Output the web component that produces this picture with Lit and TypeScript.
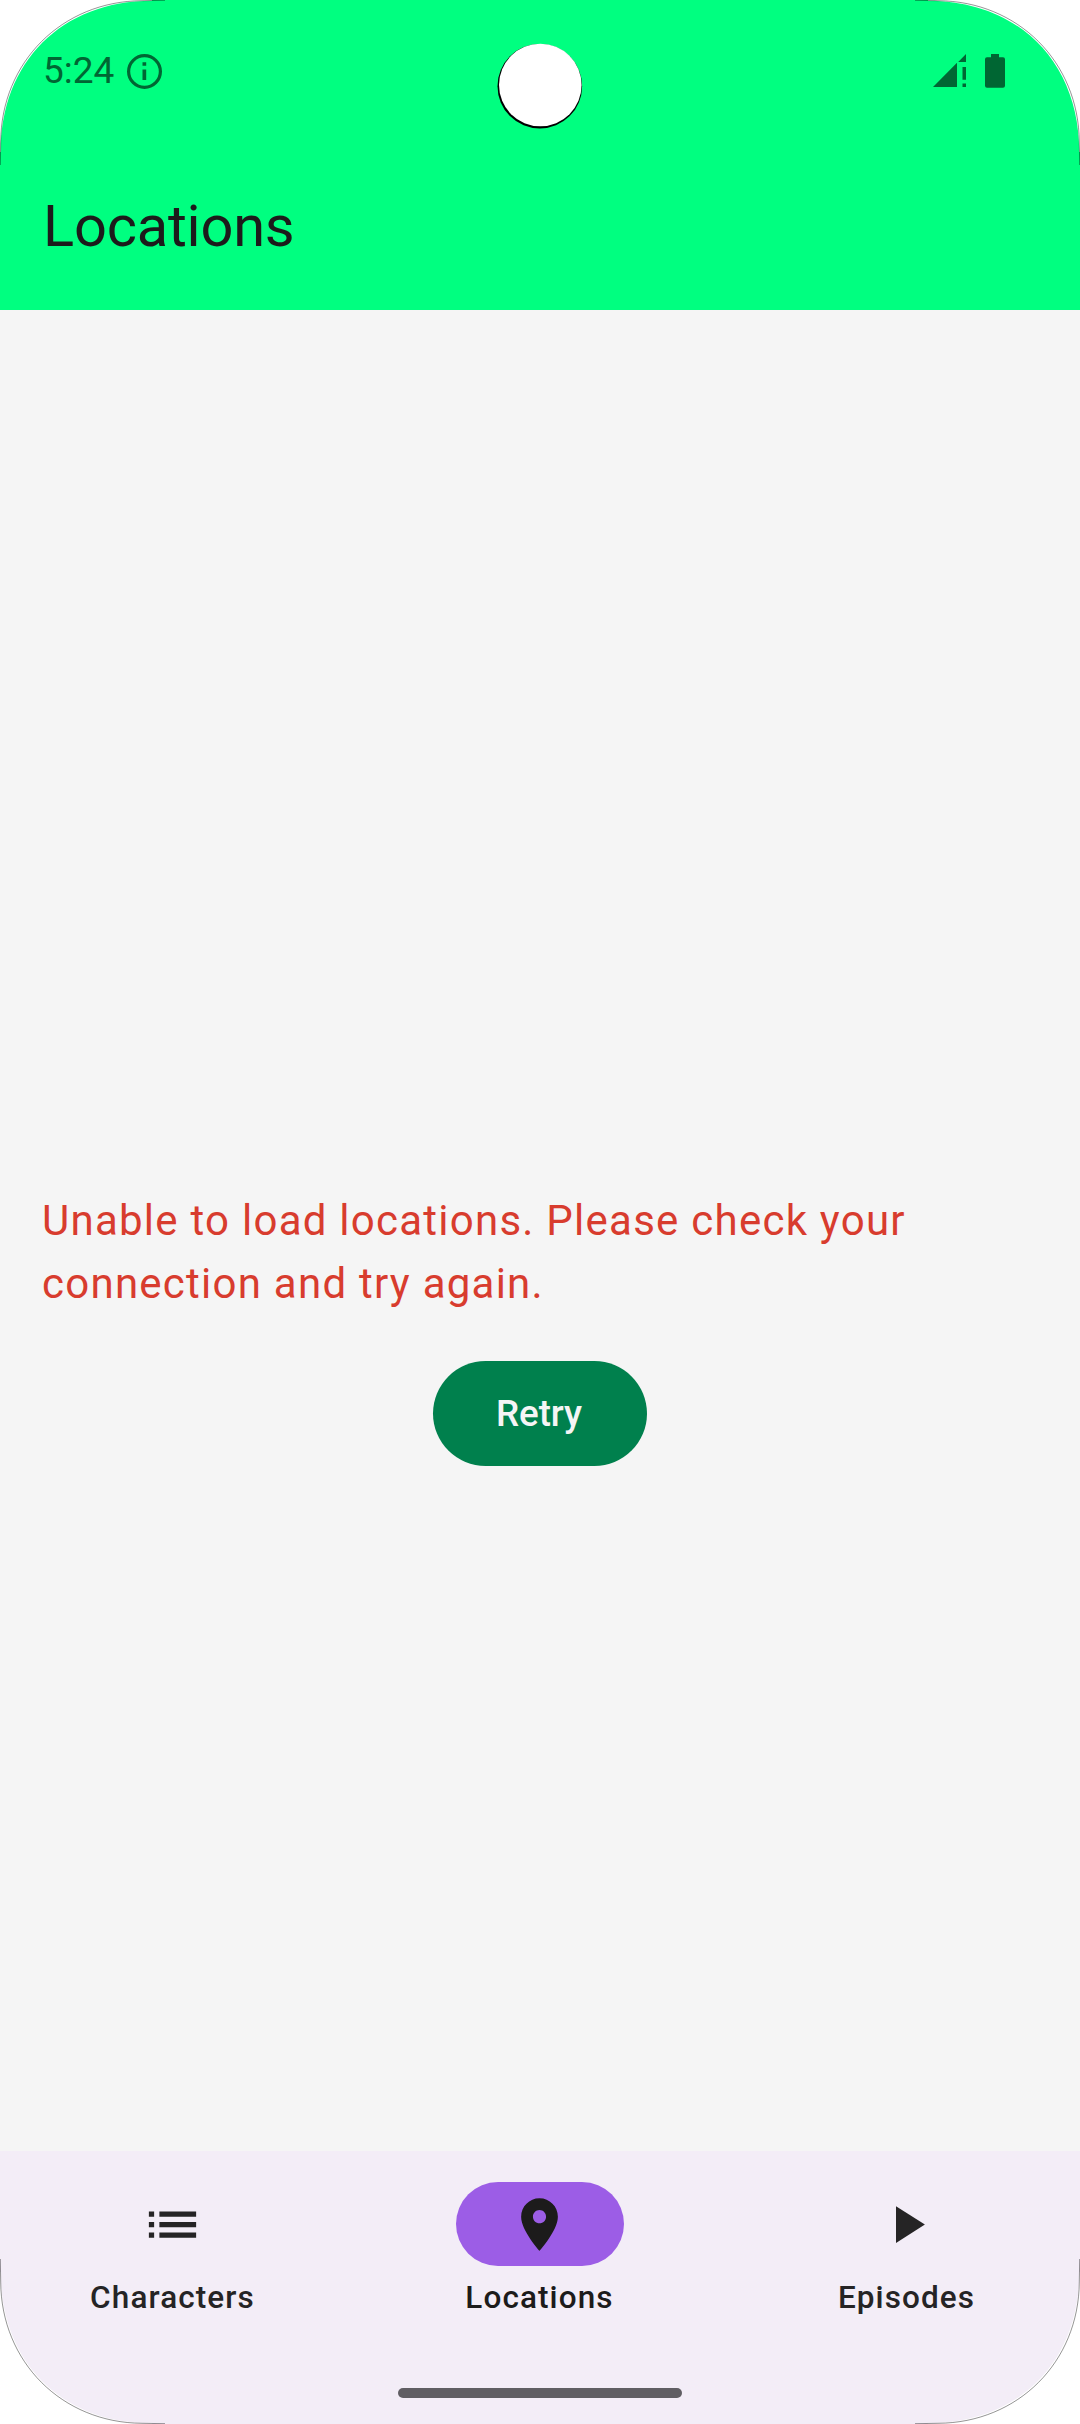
import { LitElement, html, css, svg } from "lit";
import { customElement } from "lit/decorators.js";

const icons = {
  list: svg`<path d="M3 13h2v-2H3v2zm0 4h2v-2H3v2zm0-8h2V7H3v2zm4 4h14v-2H7v2zm0 4h14v-2H7v2zM7 7v2h14V7H7z"/>`,
  place: svg`<path d="M12 2C8.130 2 5 5.130 5 9c0 5.250 7 13 7 13s7-7.750 7-13c0-3.870-3.130-7-7-7zm0 9.500c-1.380 0-2.500-1.120-2.500-2.500s1.120-2.500 2.500-2.500 2.500 1.120 2.500 2.500-1.120 2.500-2.500 2.500z"/>`,
  play: svg`<path d="M8 5v14l11-7z"/>`,
};

const tabs = [
  { label: "Characters", icon: icons.list, active: false },
  { label: "Locations", icon: icons.place, active: true },
  { label: "Episodes", icon: icons.play, active: false },
];

// One rounded screen corner, drawn for the top left and mirrored for the others.
const corner = (transform: string) => svg`
  <g transform=${transform}>
    <path class="outside" d="M0 0H152V0.700C61.800 0.700 0.700 61.800 0.700 152H0z" />
    <path class="edge" d="M165 0.300L142 0.700C62 1.200 1.200 62 0.700 142L0.300 165" />
  </g>`;

@customElement("app-root")
export class AppRoot extends LitElement {
  static styles = css`
    :host {
      display: block;
      background: #fff;
    }
    .screen {
      position: relative;
      display: flex;
      flex-direction: column;
      width: 1080px;
      height: 2424px;
      background: #f5f5f5;
      font-family: Roboto, sans-serif;
      color: #1c1b1b;
      overflow: hidden;
    }
    .bezel {
      position: absolute;
      inset: 0;
      width: 1080px;
      height: 2424px;
      pointer-events: none;
    }
    .outside {
      fill: #fff;
    }
    .edge {
      fill: none;
      stroke: #000;
      stroke-width: 0.7;
      stroke-opacity: 0.6;
    }
    .top {
      height: 310px;
      background: #00ff80;
      display: flex;
      flex-direction: column;
      flex: none;
    }
    .status {
      height: 142px;
      box-sizing: border-box;
      padding: 0 75px 0 43px;
      display: flex;
      align-items: center;
      color: #006633;
      font-size: 37px;
    }
    .clock {
      line-height: 44px;
      width: 72px;
    }
    .info {
      width: 36px;
      height: 36px;
      margin-left: 12px;
    }
    .signal {
      width: 34px;
      height: 34px;
      margin-left: auto;
    }
    .battery {
      width: 20px;
      height: 34px;
      margin-left: 18px;
    }
    .title {
      margin: 0;
      padding-left: 43px;
      font-size: 57.75px;
      font-weight: 400;
      line-height: 168px;
      letter-spacing: -0.2px;
    }
    .body {
      flex: 1;
      display: flex;
      flex-direction: column;
      align-items: center;
      padding: 879px 42px 0;
    }
    .message {
      margin: 0;
      align-self: stretch;
      color: #d83c2e;
      font-size: 42px;
      line-height: 63px;
      letter-spacing: 1.25px;
    }
    .retry {
      box-sizing: border-box;
      margin-top: 46px;
      width: 214px;
      height: 105px;
      padding: 0 2px 0 0;
      border: 0;
      border-radius: 53px;
      background: #00804d;
      color: #f5f5f5;
      font: 500 36.75px/105px Roboto, sans-serif;
      letter-spacing: -0.1px;
    }
    .nav {
      height: 273px;
      flex: none;
      box-sizing: border-box;
      background: #f3edf7;
      display: flex;
      flex-direction: column;
      align-items: center;
      justify-content: space-between;
      padding: 31px 0 26px;
    }
    .tabs {
      align-self: stretch;
      display: grid;
      grid-template-columns: repeat(3, 1fr);
      gap: 21px;
    }
    .tab {
      display: flex;
      flex-direction: column;
      align-items: center;
      gap: 11px;
      color: #252425;
      font-size: 31.5px;
      font-weight: 500;
      line-height: 42px;
      letter-spacing: 1.1px;
    }
    .label {
      padding-right: 1px;
    }
    .tab.active {
      color: #1c1b1b;
    }
    .pill {
      width: 168px;
      height: 84px;
      border-radius: 42px;
      display: flex;
      align-items: center;
      justify-content: center;
    }
    .active .pill {
      background: #9c5de6;
    }
    .pill svg {
      width: 63px;
      height: 63px;
      margin-right: 1px;
    }
    svg {
      fill: currentColor;
      flex: none;
    }
    .handle {
      width: 284px;
      height: 10px;
      border-radius: 5px;
      background: #605e63;
    }
  `;

  render() {
    return html`
      <div class="screen">
        <header class="top">
          <div class="status">
            <span class="clock">5:24</span>
            <svg class="info" viewBox="0 0 36 36">
              <circle cx="17.500" cy="18.500" r="15.900" fill="none" stroke="currentColor" stroke-width="3.200" />
              <path d="M15.500 9.300h3.700v3.500h-3.700zM15.500 16.500h3.700v10.500h-3.700z" />
            </svg>
            <svg class="signal" viewBox="0 0 34 34">
              <path d="M0 33L24 8.800V33zM25.200 8L33 0v8zM29.500 13H33v12.700h-3.500zM29.500 29.500H33V33h-3.500z" />
            </svg>
            <svg class="battery" viewBox="0 0 20 34">
              <path d="M6 0h8v3.200h4a2 2 0 0 1 2 2V31.700a2 2 0 0 1-2 2H2a2 2 0 0 1-2-2V5.200a2 2 0 0 1 2-2h4z" />
            </svg>
          </div>
          <h1 class="title">Locations</h1>
        </header>
        <main class="body">
          <p class="message">Unable to load locations. Please check your connection and try again.</p>
          <button class="retry">Retry</button>
        </main>
        <nav class="nav">
          <div class="tabs">
            ${tabs.map(
              (t) => html`<div class="tab ${t.active ? "active" : ""}">
                <span class="pill"><svg viewBox="0 0 24 24">${t.icon}</svg></span>
                <span class="label">${t.label}</span>
              </div>`
            )}
          </div>
          <div class="handle"></div>
        </nav>
        <svg class="bezel" viewBox="0 0 1080 2424">
          <circle cx="539.800" cy="86.200" r="42.300" fill="#000" />
          <circle cx="540.300" cy="85" r="41.300" fill="#fff" />
          ${corner("")}
          ${corner("translate(1080 0) scale(-1 1)")}
          ${corner("translate(0 2424) scale(1 -1)")}
          ${corner("translate(1080 2424) scale(-1 -1)")}
        </svg>
      </div>
    `;
  }
}
